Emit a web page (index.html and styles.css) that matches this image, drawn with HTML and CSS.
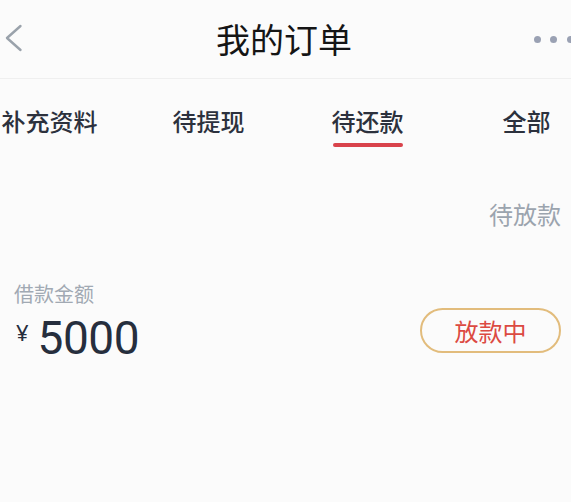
FILE: index.html
```html
<!DOCTYPE html>
<html lang="zh-CN">
<head>
    <meta charset="UTF-8">
    <meta name="viewport" content="width=device-width, initial-scale=1.0">
    <title>我的订单</title>
    <link rel="stylesheet" href="styles.css">
</head>
<body>
    <div class="header">
        <div class="back">
            <svg width="24" height="30" viewBox="0 0 24 30">
                <path d="M20.5 2 L7 14 L20.5 26" fill="none" stroke="#9aa2ab" stroke-width="2.4" stroke-linecap="round" stroke-linejoin="round"/>
            </svg>
        </div>
        <div class="title">我的订单</div>
        <div class="more">
            <span class="dot"></span>
            <span class="dot"></span>
            <span class="dot"></span>
        </div>
    </div>

    <div class="tabs">
        <div class="tab-row">
            <div class="tab">补充资料</div>
            <div class="tab">待提现</div>
            <div class="tab active">待还款</div>
            <div class="tab">全部</div>
        </div>
    </div>

    <div class="order">
        <div class="order-status">待放款</div>
        <div class="order-label">借款金额</div>
        <div class="order-row">
            <div class="amount">
                <span class="currency">¥</span>
                <span class="value">5000</span>
            </div>
            <button class="state-btn">放款中</button>
        </div>
    </div>
</body>
</html>
```

FILE: styles.css
```css
body {
    margin: 0;
    background-color: #fbfbfb;
    font-family: "Noto Sans CJK SC", "Noto Sans", sans-serif;
    overflow: hidden;
}
.header {
    display: grid;
    grid-template-columns: 1fr auto 1fr;
    align-items: center;
    height: 78px;
    border-bottom: 1px solid #efefef;
}
.back {
    display: flex;
    align-items: center;
}
.title {
    font-size: 34px;
    line-height: 40px;
    color: #151515;
    margin-right: 3px;
}
.more {
    justify-self: end;
    display: flex;
    gap: 9.7px;
    margin-right: -3px;
}
.dot {
    width: 7px;
    height: 7px;
    border-radius: 50%;
    background-color: #9aa1b3;
}
.tabs {
    overflow: hidden;
}
.tab-row {
    display: flex;
    margin-left: -30px;
}
.tab {
    flex-shrink: 0;
    width: 159px;
    padding-top: 27px;
    height: 41px;
    text-align: center;
    font-size: 24px;
    line-height: 30px;
    font-weight: 500;
    color: #2c313d;
}
.tab.active::after {
    content: "";
    display: block;
    width: 70px;
    height: 4px;
    margin: 7px auto 0;
    border-radius: 2px;
    background-color: #d9434b;
}
.order {
    padding: 0 10px 0 14px;
}
.order-status {
    margin-top: 52px;
    text-align: right;
    font-size: 24px;
    line-height: 30px;
    color: #9ba4ae;
}
.order-label {
    margin-top: 53px;
    font-size: 20px;
    line-height: 24px;
    color: #a1a9b3;
}
.order-row {
    display: flex;
    justify-content: space-between;
    align-items: flex-start;
    margin-top: 2px;
}
.amount {
    display: flex;
    align-items: flex-start;
    padding-top: 6px;
    margin-left: 2px;
    color: #262e3d;
}
.currency {
    font-family: "Noto Sans", sans-serif;
    font-size: 22px;
    line-height: 30px;
    margin-top: 3px;
    margin-right: 9px;
}
.value {
    font-family: Roboto, "Noto Sans", sans-serif;
    font-size: 46px;
    line-height: 48px;
    letter-spacing: -0.5px;
}
.state-btn {
    width: 141px;
    height: 45px;
    box-sizing: border-box;
    border: 2px solid #e2bc7c;
    border-radius: 23px;
    background: transparent;
    color: #dc4a42;
    font-family: "Noto Sans CJK SC", sans-serif;
    font-size: 24px;
    line-height: 30px;
    padding: 0;
}
```
